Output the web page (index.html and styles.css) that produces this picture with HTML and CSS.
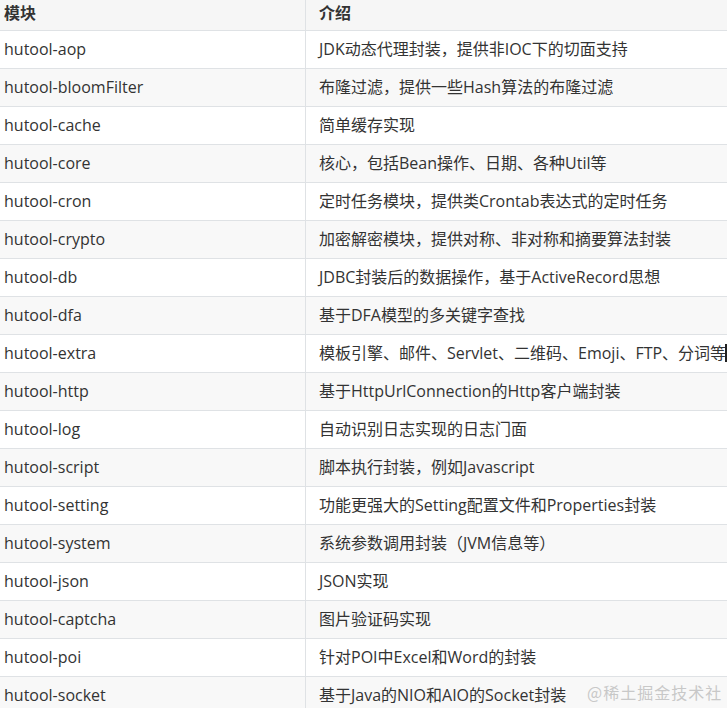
FILE: index.html
```html
<!DOCTYPE html>
<html lang="zh-CN">
<head>
<meta charset="utf-8">
<title>hutool modules</title>
<link rel="stylesheet" href="styles.css">
</head>
<body>
<div class="page">
  <table class="modules">
    <thead>
      <tr><th class="c1">模块</th><th class="c2">介绍</th></tr>
    </thead>
    <tbody>
      <tr><td class="c1">hutool-aop</td><td class="c2">JDK动态代理封装，提供非IOC下的切面支持</td></tr>
      <tr><td class="c1">hutool-bloomFilter</td><td class="c2">布隆过滤，提供一些Hash算法的布隆过滤</td></tr>
      <tr><td class="c1">hutool-cache</td><td class="c2">简单缓存实现</td></tr>
      <tr><td class="c1">hutool-core</td><td class="c2">核心，包括Bean操作、日期、各种Util等</td></tr>
      <tr><td class="c1">hutool-cron</td><td class="c2">定时任务模块，提供类Crontab表达式的定时任务</td></tr>
      <tr><td class="c1">hutool-crypto</td><td class="c2">加密解密模块，提供对称、非对称和摘要算法封装</td></tr>
      <tr><td class="c1">hutool-db</td><td class="c2">JDBC封装后的数据操作，基于ActiveRecord思想</td></tr>
      <tr><td class="c1">hutool-dfa</td><td class="c2">基于DFA模型的多关键字查找</td></tr>
      <tr><td class="c1">hutool-extra</td><td class="c2">模板引擎、邮件、Servlet、二维码、Emoji、FTP、分词等<span class="caret"></span></td></tr>
      <tr><td class="c1">hutool-http</td><td class="c2">基于HttpUrlConnection的Http客户端封装</td></tr>
      <tr><td class="c1">hutool-log</td><td class="c2">自动识别日志实现的日志门面</td></tr>
      <tr><td class="c1">hutool-script</td><td class="c2">脚本执行封装，例如Javascript</td></tr>
      <tr><td class="c1">hutool-setting</td><td class="c2">功能更强大的Setting配置文件和Properties封装</td></tr>
      <tr><td class="c1">hutool-system</td><td class="c2">系统参数调用封装（JVM信息等）</td></tr>
      <tr><td class="c1">hutool-json</td><td class="c2">JSON实现</td></tr>
      <tr><td class="c1">hutool-captcha</td><td class="c2">图片验证码实现</td></tr>
      <tr><td class="c1">hutool-poi</td><td class="c2">针对POI中Excel和Word的封装</td></tr>
      <tr><td class="c1">hutool-socket</td><td class="c2">基于Java的NIO和AIO的Socket封装</td></tr>
    </tbody>
  </table>
  <div class="watermark">@稀土掘金技术社区</div>
</div>
</body>
</html>
```
FILE: styles.css
```css
html, body {
  margin: 0;
  padding: 0;
  background: #ffffff;
  overflow: hidden;
}
.page {
  position: relative;
  width: 727px;
  height: 708px;
  overflow: hidden;
  font-family: "Open Sans", "Noto Sans CJK SC", sans-serif;
  font-size: 16px;
  color: #333333;
}
.modules {
  border-collapse: collapse;
  table-layout: fixed;
  width: 900px;
}
.modules th,
.modules td {
  height: 35px;
  padding: 0 0 2px 0;
  text-align: left;
  white-space: nowrap;
  vertical-align: middle;
  line-height: 24px;
  border-bottom: 1px solid #dfe2e5;
}
.modules th {
  height: 29px;
  padding: 1px 0 0 0;
  font-weight: 700;
  line-height: 24px;
  vertical-align: top;
  background: #f6f6f6;
}
.c1 {
  width: 301px;
  padding-left: 4px !important;
  border-right: 1px solid #dfe2e5;
}
.c2 {
  padding-left: 13px !important;
}
.modules tbody tr:nth-child(even) td {
  background: #f8f8f8;
}
.caret {
  display: inline-block;
  width: 2px;
  height: 18px;
  margin-left: -1px;
  vertical-align: -3px;
  background: #222222;
}
.watermark {
  position: absolute;
  left: 587px;
  top: 681px;
  font-family: "Noto Sans CJK SC", sans-serif;
  font-size: 16px;
  line-height: 22px;
  color: #c8c8c8;
  letter-spacing: 1px;
}
```
